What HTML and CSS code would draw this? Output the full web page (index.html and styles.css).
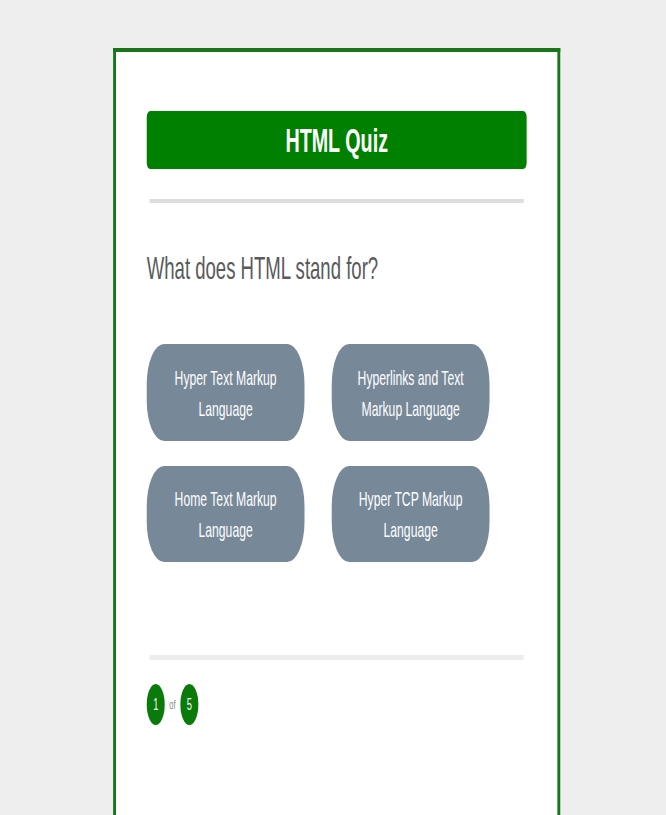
FILE: index.html
```html
<!DOCTYPE html>
<html lang="en">
<head>
<meta charset="utf-8">
<title>HTML Quiz</title>
<link rel="stylesheet" href="styles.css">
</head>
<body>
<div class="stage">
  <main class="card">
    <h1 class="title">HTML Quiz</h1>
    <hr class="rule">
    <p class="question">What does HTML stand for?</p>
    <div class="choices">
      <button class="choice">Hyper Text Markup Language</button>
      <button class="choice">Hyperlinks and Text Markup Language</button>
      <button class="choice">Home Text Markup Language</button>
      <button class="choice">Hyper TCP Markup Language</button>
    </div>
    <hr class="rule rule-light">
    <div class="progress">
      <span class="num">1</span>
      <span class="of">of</span>
      <span class="num">5</span>
    </div>
  </main>
</div>
</body>
</html>
```
FILE: styles.css
```css
html, body {
  margin: 0;
  padding: 0;
}
body {
  background: #eeeeee;
  height: 815px;
  overflow: hidden;
  font-family: "Liberation Sans", Arial, sans-serif;
}
.stage {
  width: 1148px;
  transform: scaleX(0.58);
  transform-origin: 0 0;
  padding-top: 48px;
}
.card {
  margin-left: 195px;
  width: 771px;
  height: 767px;
  box-sizing: border-box;
  background: #ffffff;
  border: 5px solid #1a751a;
  border-top-width: 4px;
  border-bottom: 0;
  padding: 59px 53px 0 53px;
}
.title {
  margin: 0;
  height: 58px;
  line-height: 58px;
  background: #008000;
  border-radius: 6px;
  color: #ffffff;
  text-align: center;
  font-size: 34px;
  font-weight: bold;
}
.rule {
  border: 0;
  height: 4px;
  background: #dddddd;
  margin: 30px 5px 0 5px;
}
.rule-light {
  height: 5px;
  background: #ececec;
  margin-top: 93px;
}
.question {
  margin: 45px 0 0 0;
  font-size: 32px;
  line-height: 40px;
  color: #5a5a5a;
}
.choices {
  margin-top: 56px;
  display: grid;
  grid-template-columns: 272px 272px;
  grid-template-rows: 97px 96px;
  column-gap: 47px;
  row-gap: 25px;
}
.choice {
  border: 0;
  margin: 0;
  background: #778899;
  color: #ffffff;
  border-radius: 30px / 40px;
  padding: 0 20px;
  font-family: "Liberation Sans", Arial, sans-serif;
  font-size: 21px;
  line-height: 31px;
  text-align: center;
}
.progress {
  margin-top: 24px;
  display: flex;
  align-items: center;
  gap: 8px;
  height: 41px;
}
.num {
  width: 31px;
  height: 41px;
  border-radius: 50%;
  background: #0a7a0a;
  color: #ffffff;
  display: flex;
  align-items: center;
  justify-content: center;
  font-size: 16px;
}
.of {
  color: #888888;
  font-size: 13px;
}
```
